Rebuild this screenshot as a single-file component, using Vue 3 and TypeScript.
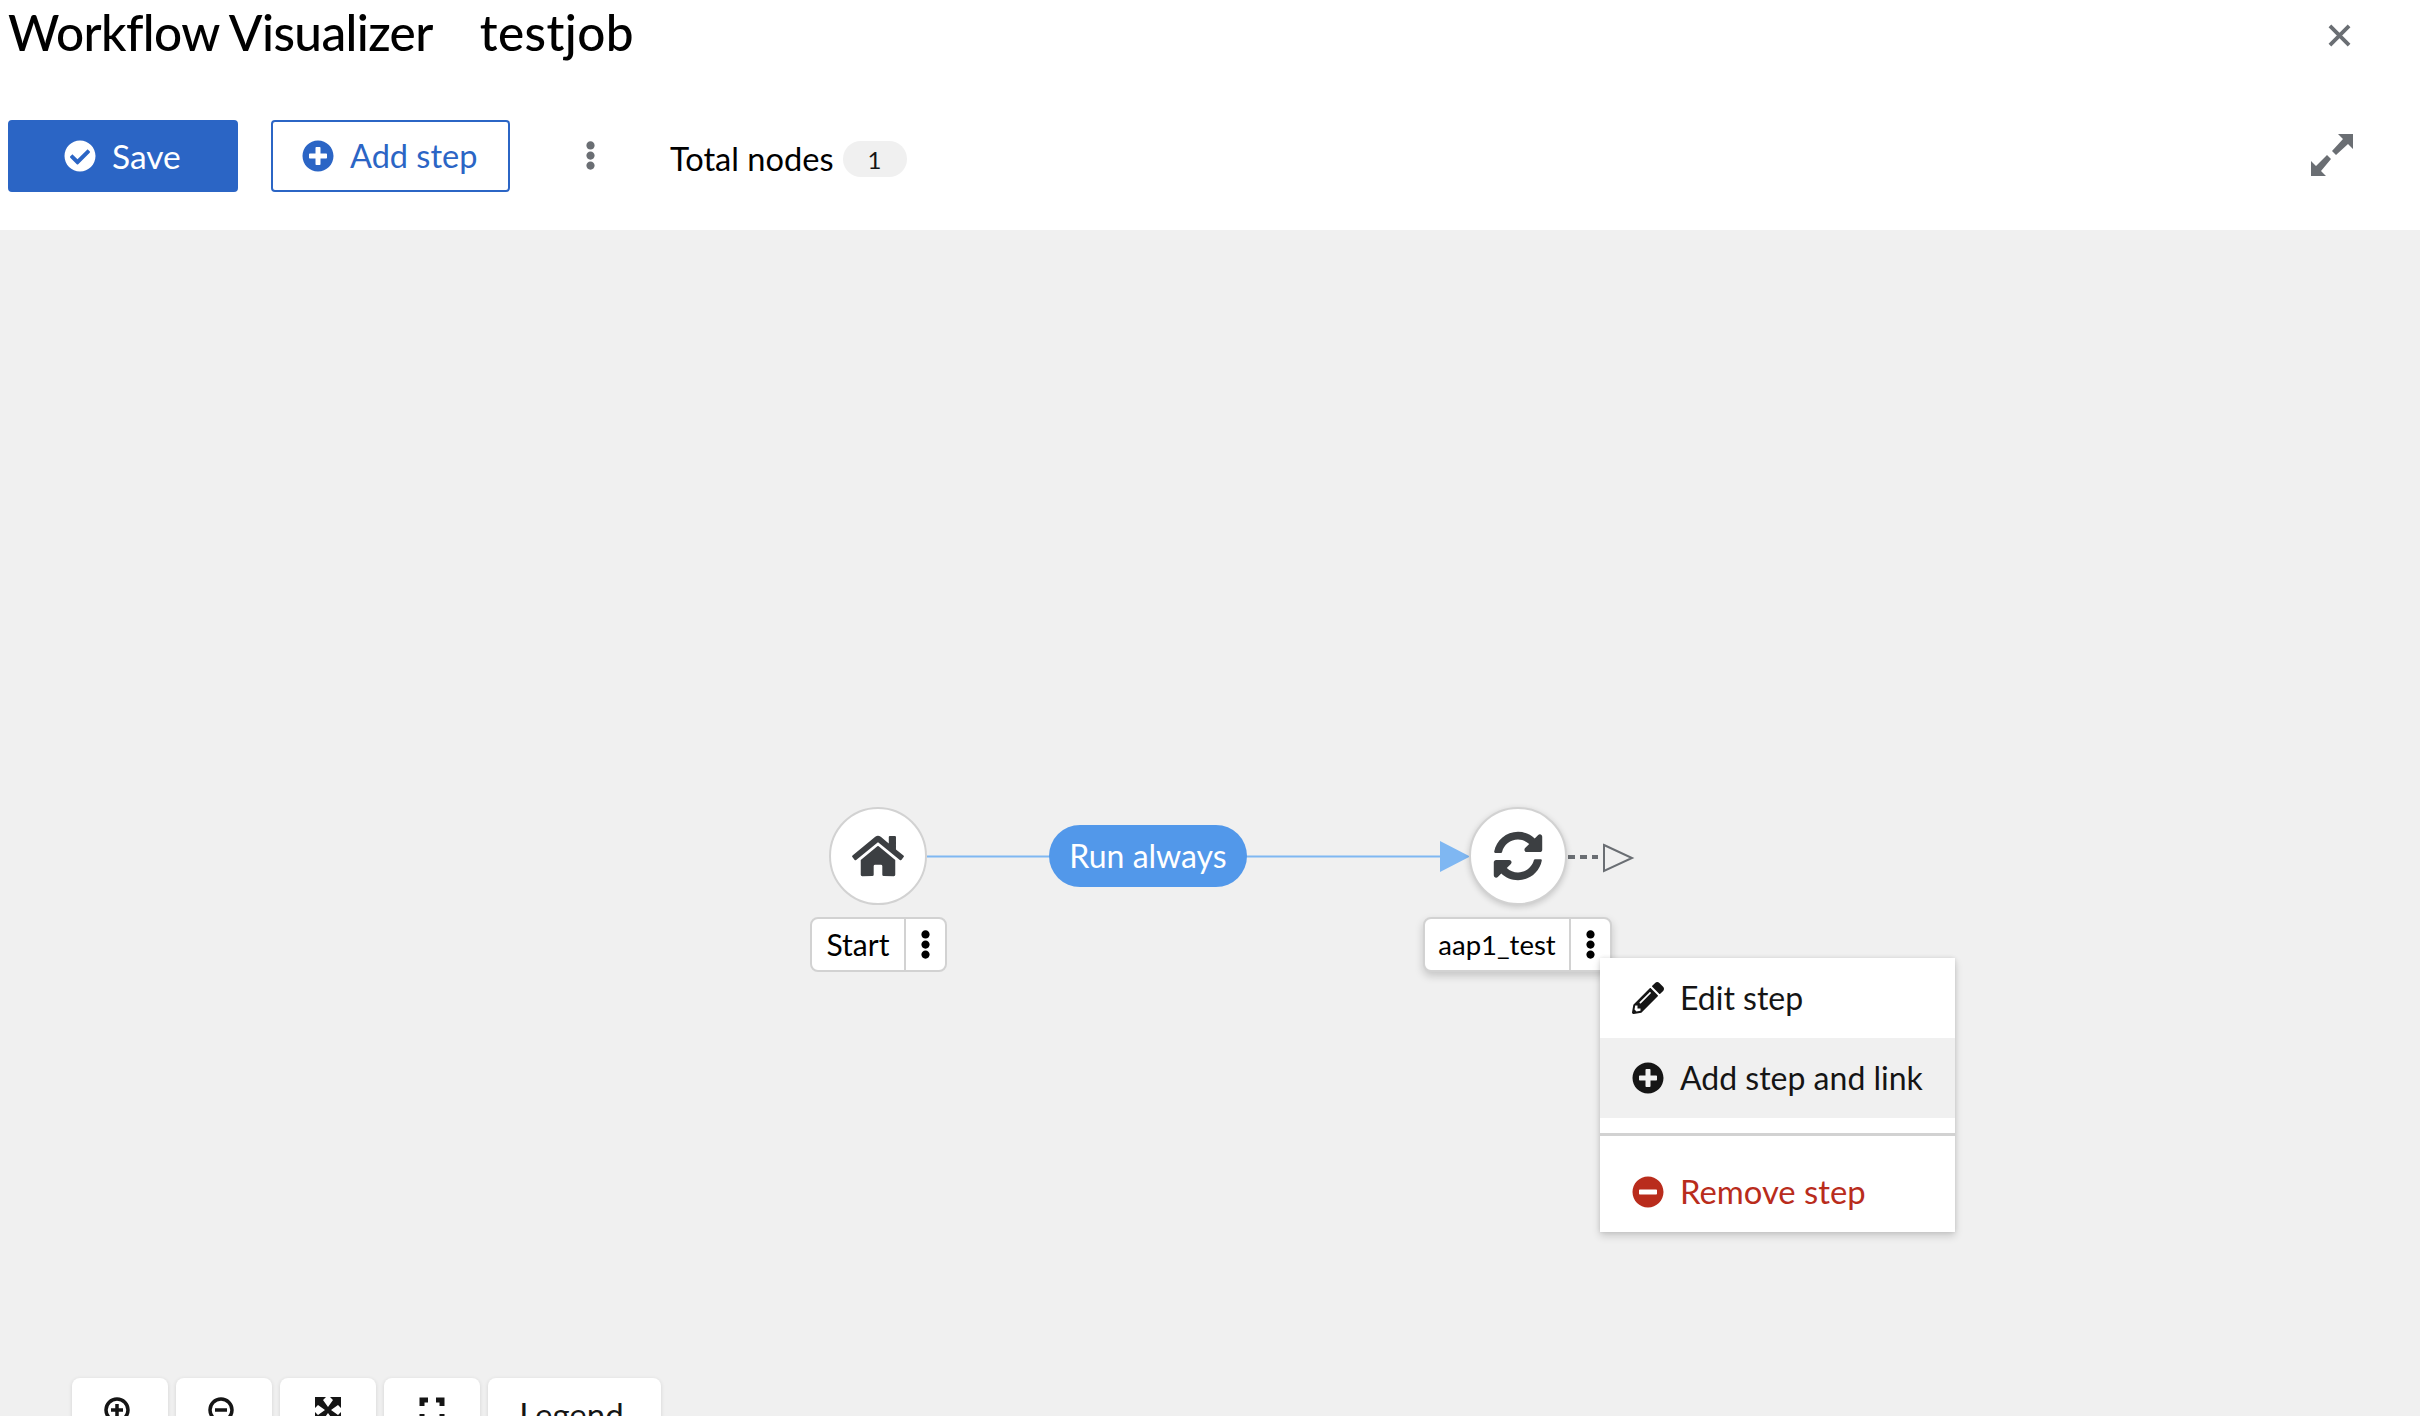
<script setup lang="ts">
const icons = {
  check: 'M504 256c0 136.967-111.033 248-248 248S8 392.967 8 256 119.033 8 256 8s248 111.033 248 248zM227.314 387.314l184-184c6.248-6.248 6.248-16.379 0-22.627l-22.627-22.627c-6.248-6.249-16.379-6.249-22.628 0L216 308.118l-70.059-70.059c-6.248-6.248-16.379-6.248-22.628 0l-22.627 22.627c-6.248 6.248-6.248 16.379 0 22.627l104 104c6.249 6.249 16.379 6.249 22.628.001z',
  plus: 'M256 8C119 8 8 119 8 256s111 248 248 248 248-111 248-248S393 8 256 8zm144 276c0 6.6-5.4 12-12 12h-92v92c0 6.6-5.4 12-12 12h-56c-6.6 0-12-5.4-12-12v-92h-92c-6.6 0-12-5.4-12-12v-56c0-6.6 5.4-12 12-12h92v-92c0-6.6 5.4-12 12-12h56c6.6 0 12 5.4 12 12v92h92c6.6 0 12 5.4 12 12v56z',
  minus: 'M256 8C119 8 8 119 8 256s111 248 248 248 248-111 248-248S393 8 256 8zM124 296c-6.6 0-12-5.4-12-12v-56c0-6.6 5.4-12 12-12h264c6.6 0 12 5.4 12 12v56c0 6.6-5.4 12-12 12H124z',
  sync: 'M370.72 133.28C339.458 104.008 298.888 87.962 255.848 88c-77.458.068-144.328 53.178-162.791 126.85-1.344 5.363-6.122 9.15-11.651 9.15H24.103c-7.498 0-13.194-6.807-11.807-14.176C33.933 94.924 134.813 8 256 8c66.448 0 126.791 26.136 171.315 68.685L463.03 40.97C478.149 25.851 504 36.559 504 57.941V192c0 13.255-10.745 24-24 24H345.941c-21.382 0-32.09-25.851-16.971-40.971l41.75-41.749zM32 296h134.059c21.382 0 32.09 25.851 16.971 40.971l-41.75 41.75c31.262 29.273 71.835 45.319 114.876 45.28 77.418-.07 144.315-53.144 162.787-126.849 1.344-5.363 6.122-9.15 11.651-9.15h57.304c7.498 0 13.194 6.807 11.807 14.176C478.067 417.076 377.187 504 256 504c-66.448 0-126.791-26.136-171.315-68.685L48.97 471.03C33.851 486.149 8 475.441 8 454.059V320c0-13.255 10.745-24 24-24z',
  home: 'M280.37 148.26L96 300.11V464a16 16 0 0 0 16 16l112.06-.29a16 16 0 0 0 15.92-16V368a16 16 0 0 1 16-16h64a16 16 0 0 1 16 16v95.64a16 16 0 0 0 16 16.05L464 480a16 16 0 0 0 16-16V300L295.67 148.26a12.19 12.19 0 0 0-15.3 0zM571.6 251.47L488 182.56V44.05a12 12 0 0 0-12-12h-56a12 12 0 0 0-12 12v72.61L318.47 43a48 48 0 0 0-61 0L4.34 251.47a12 12 0 0 0-1.6 16.9l25.5 31A12 12 0 0 0 45.15 301l235.22-193.74a12.19 12.19 0 0 1 15.3 0L530.9 301a12 12 0 0 0 16.9-1.6l25.5-31a12 12 0 0 0-1.7-16.93z',
  pencil: 'M497.9 142.1l-46.1 46.1c-4.7 4.7-12.3 4.7-17 0l-111-111c-4.7-4.7-4.7-12.3 0-17l46.1-46.1c18.7-18.7 49.1-18.7 67.9 0l60.1 60.1c18.8 18.7 18.8 49.1 0 67.9zM284.2 99.8L21.6 362.4.4 483.9c-2.9 16.4 11.4 30.6 27.8 27.8l121.5-21.3 262.6-262.6c4.7-4.7 4.7-12.3 0-17l-111-111c-4.8-4.7-12.4-4.7-17.1 0zM124.1 339.9c-5.5-5.5-5.5-14.3 0-19.8l154-154c5.5-5.5 14.3-5.5 19.8 0s5.5 14.3 0 19.8l-154 154c-5.5 5.5-14.3 5.5-19.8 0zM88 424h48v36.3l-64.5 11.3-31.1-31.1L51.7 376H88v48z',
  kebab: 'M96 184c39.8 0 72 32.2 72 72s-32.2 72-72 72-72-32.2-72-72 32.2-72 72-72zM24 80c0 39.8 32.2 72 72 72s72-32.2 72-72S135.8 8 96 8 24 40.2 24 80zm0 352c0 39.8 32.2 72 72 72s72-32.2 72-72-32.2-72-72-72-72 32.2-72 72z',
}
</script>

<template>
  <div class="page">
    <header class="head">
      <div class="title-row">
        <h1 class="title"><span>Workflow Visualizer</span><span class="job">testjob</span></h1>
        <svg class="close" viewBox="0 0 24 24"><path d="M2 2 22 22M22 2 2 22" /></svg>
      </div>
      <div class="tools">
        <button class="btn primary">
          <svg class="ic" viewBox="0 0 512 512"><path :d="icons.check" /></svg>Save
        </button>
        <button class="btn outline">
          <svg class="ic" viewBox="0 0 512 512"><path :d="icons.plus" /></svg>Add step
        </button>
        <svg class="more" viewBox="0 0 192 512"><path :d="icons.kebab" /></svg>
        <span class="total">Total nodes</span>
        <span class="badge">1</span>
        <svg class="expand" viewBox="0 0 42 42">
          <path d="M27 0H42V15L37 10 25 21 21 17 32 5zM0 42V27L5 32 16 21 20 25 10 37 15 42z" />
        </svg>
      </div>
    </header>

    <main class="canvas">
      <svg class="edges" viewBox="0 0 2420 1186">
        <path class="edge" d="M927 626.5H1440" />
        <path class="head-fill" d="M1440 611 1470 626.500 1440 642z" />
        <path class="dash" d="M1568 627H1598" />
        <path class="head-open" d="M1604 615 1632 628 1604 641z" />
      </svg>

      <div class="circle start">
        <svg class="home" viewBox="0 0 576 512"><path :d="icons.home" /></svg>
      </div>
      <div class="pill">Run always</div>
      <div class="circle job-node">
        <svg class="sync" viewBox="0 0 512 512"><path :d="icons.sync" /></svg>
      </div>

      <div class="tag tag-start">
        <span class="tag-text">Start</span>
        <span class="tag-more"><svg viewBox="0 0 192 512"><path :d="icons.kebab" /></svg></span>
      </div>
      <div class="tag tag-job">
        <span class="tag-text job-text">aap1_test</span>
        <span class="tag-more"><svg viewBox="0 0 192 512"><path :d="icons.kebab" /></svg></span>
      </div>

      <ul class="menu">
        <li class="item">
          <svg viewBox="0 0 512 512"><path :d="icons.pencil" /></svg>Edit step
        </li>
        <li class="item hover">
          <svg viewBox="0 0 512 512"><path :d="icons.plus" /></svg>Add step and link
        </li>
        <li class="sep"></li>
        <li class="item danger">
          <svg viewBox="0 0 512 512"><path :d="icons.minus" /></svg>Remove step
        </li>
      </ul>

      <div class="zoom-bar">
        <button class="zb">
          <svg viewBox="0 0 32 32"><circle cx="16" cy="16" r="11" /><path d="M16 10v12M10 16h12" /></svg>
        </button>
        <button class="zb">
          <svg viewBox="0 0 32 32"><circle cx="16" cy="16" r="11" /><path d="M10 16h12" /></svg>
        </button>
        <button class="zb">
          <svg viewBox="0 0 32 32"><path class="solid" d="M3 3h11l-3 3 5 7 5-7-3-3h11v11l-3-3-7 5 7 5 3-3v11H18l3-3-5-7-5 7 3 3H3V18l3 3 7-5-7-5-3 3z" /></svg>
        </button>
        <button class="zb">
          <svg viewBox="0 0 32 32"><path class="corner" d="M6 12V6h6M20 6h6v6M26 20v6h-6M12 26H6v-6" /></svg>
        </button>
        <button class="zb legend">Legend</button>
      </div>
    </main>
  </div>
</template>

<style>
html, body { margin: 0; background: #fff; }
</style>

<style scoped>
.page {
  width: 2420px;
  height: 1416px;
  display: flex;
  flex-direction: column;
  overflow: hidden;
  font-family: Lato, "Open Sans", sans-serif;
  color: #151515;
}
.head {
  height: 230px;
  flex: none;
  box-sizing: border-box;
  background: #fff;
  padding: 0 0 0 8px;
}
.title-row {
  display: flex;
  align-items: center;
  justify-content: space-between;
  height: 64px;
  padding-right: 69px;
  margin-bottom: 56px;
}
.title {
  margin: 0;
  display: flex;
  gap: 47px;
  font-size: 49.500px;
  font-weight: 500;
  line-height: 64px;
  color: #000;
  letter-spacing: -0.6px;
}
.job { letter-spacing: 0.4px; }
.close {
  width: 23px;
  height: 23px;
  margin-top: 6px;
  fill: none;
  stroke: #6a6e73;
  stroke-width: 4;
}
.tools {
  display: flex;
  align-items: center;
  height: 72px;
  padding-right: 67px;
}
.btn {
  display: flex;
  align-items: center;
  box-sizing: border-box;
  height: 72px;
  padding-bottom: 2px;
  border-radius: 4px;
  border: 2px solid #2b65c5;
  font: 400 32.5px Lato, sans-serif;
}
.primary {
  width: 230px;
  padding-left: 54px;
  background: #2b65c5;
  color: #fff;
  margin-right: 33px;
  font-size: 33.500px;
}
.outline {
  width: 239px;
  padding-left: 29px;
  background: #fff;
  color: #2b65c5;
}
.ic {
  width: 32px;
  height: 32px;
  margin-right: 16px;
  fill: currentColor;
}
.more {
  width: 11px;
  height: 31px;
  margin: -2px 0 0 75px;
  fill: #6a6e73;
}
.total {
  margin: 4px 0 0 74px;
  font-size: 32.6px;
  color: #000;
}
.badge {
  width: 64px;
  height: 36px;
  margin: 6px 0 0 9px;
  border-radius: 18px;
  background: #f0f0f0;
  text-align: center;
  font-size: 24px;
  line-height: 38px;
}
.expand {
  width: 42px;
  height: 42px;
  margin: -3px 0 0 auto;
  fill: #6a6e73;
}
.canvas {
  position: relative;
  flex: 1;
  background: #f0f0f0;
  overflow: hidden;
}
.edges {
  position: absolute;
  inset: 0;
  width: 2420px;
  height: 1186px;
}
.edge { stroke: #7fb7f2; stroke-width: 2; fill: none; }
.head-fill { fill: #7fb7f2; }
.dash { stroke: #6a6e73; stroke-width: 4; stroke-dasharray: 7 5; fill: none; }
.head-open { fill: none; stroke: #6a6e73; stroke-width: 2; }
.circle {
  position: absolute;
  top: 577px;
  width: 98px;
  height: 98px;
  box-sizing: border-box;
  border-radius: 50%;
  border: 2px solid #d2d2d2;
  background: #fff;
  display: flex;
  align-items: center;
  justify-content: center;
}
.start { left: 829px; }
.job-node { left: 1469px; box-shadow: 0 2px 6px rgba(3, 3, 3, .18); }
.home { width: 52px; height: 46px; fill: #3c3f42; }
.sync { width: 50px; height: 50px; fill: #3c3f42; }
.pill {
  position: absolute;
  left: 1049px;
  top: 595px;
  width: 198px;
  height: 62px;
  border-radius: 31px;
  background: #5298ea;
  color: #fff;
  font-size: 32px;
  line-height: 61px;
  text-align: center;
}
.tag {
  position: absolute;
  top: 687px;
  height: 55px;
  box-sizing: border-box;
  display: flex;
  border: 2px solid #d2d2d2;
  border-radius: 8px;
  background: #fff;
}
.tag-start { left: 810px; width: 137px; }
.tag-job { left: 1423px; width: 189px; box-shadow: 0 4px 8px rgba(3, 3, 3, .18); }
.tag-text {
  flex: 1;
  text-align: center;
  font-size: 30px;
  line-height: 51px;
  color: #000;
}
.job-text { font-size: 27.500px; }
.tag-more {
  flex: none;
  width: 39px;
  border-left: 2px solid #d2d2d2;
  display: flex;
  align-items: center;
  justify-content: center;
}
.tag-more svg { width: 11px; height: 33px; fill: #000; }
.menu {
  position: absolute;
  left: 1600px;
  top: 728px;
  width: 355px;
  margin: 0;
  padding: 0;
  list-style: none;
  background: #fff;
  box-shadow: 0 4px 8px rgba(3, 3, 3, .16), 0 0 4px rgba(3, 3, 3, .1);
}
.item {
  display: flex;
  align-items: center;
  height: 80px;
  padding-left: 32px;
  padding-bottom: 2px;
  box-sizing: border-box;
  font-size: 32px;
  color: #151515;
}
.item svg { width: 32px; height: 32px; margin: 2px 16px 0 0; fill: currentColor; }
.hover { background: #f0f0f0; }
.sep { height: 3px; margin: 15px 0 0; background: #d2d2d2; }
.danger { color: #b92c1c; margin-top: 16px; font-size: 32.800px; }
.zoom-bar {
  position: absolute;
  left: 72px;
  top: 1148px;
  display: flex;
  gap: 8px;
}
.zb {
  width: 96px;
  height: 96px;
  padding: 16px 6px 0 0;
  box-sizing: border-box;
  border: 0;
  border-radius: 8px;
  background: #fff;
  box-shadow: 0 1px 4px rgba(3, 3, 3, .12);
  display: flex;
  justify-content: center;
  align-items: flex-start;
}
.zb svg { width: 32px; height: 32px; fill: none; stroke: #151515; stroke-width: 3.5; }
.zb:nth-child(3) svg, .zb:nth-child(4) svg { margin-left: 6px; }
.zb .solid { fill: #151515; stroke: none; }
.zb .corner { stroke-width: 5; }
.legend {
  width: 173px;
  padding: 16px 6px 0 0;
  font: 400 33px Lato, sans-serif;
  color: #151515;
}
</style>
